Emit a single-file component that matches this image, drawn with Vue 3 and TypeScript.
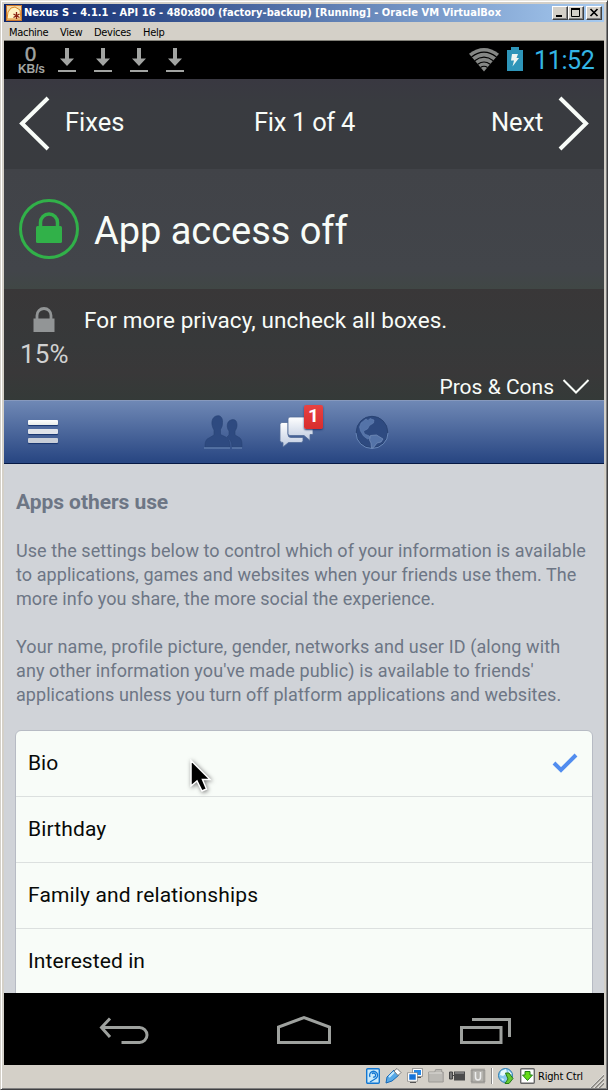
<script setup lang="ts">
const menus: string[] = ['Machine', 'View', 'Devices', 'Help']
const downloads: number[] = [1, 2, 3, 4]
const intro: string[] = [
  'Use the settings below to control which of your information is available',
  'to applications, games and websites when your friends use them. The',
  'more info you share, the more social the experience.',
]
const details: string[] = [
  'Your name, profile picture, gender, networks and user ID (along with',
  'any other information you\'ve made public) is available to friends\'',
  'applications unless you turn off platform applications and websites.',
]
interface Permission { label: string; checked: boolean }
const permissions: Permission[] = [
  { label: 'Bio', checked: true },
  { label: 'Birthday', checked: false },
  { label: 'Family and relationships', checked: false },
  { label: 'Interested in', checked: false },
]
</script>

<template>
  <div class="window">
    <header class="titlebar">
      <svg class="app-icon" width="16" height="16" viewBox="0 0 16 16">
        <rect x="0" y="0" width="16" height="16" fill="#c9762d" />
        <path d="M1 1h14v14H1z" fill="#f3d9a4" />
        <path d="M1 14L2 7l3-4 4-1 5 3 1 9z" fill="#fff3c4" stroke="#dd8a2c" />
        <path d="M10.500 7v7M7.500 9l6 3.500M13.500 9l-6 3.500" stroke="#8a2010" stroke-width="1.300" />
      </svg>
      <span class="title">Nexus S - 4.1.1 - API 16 - 480x800 (factory-backup) [Running] - Oracle VM VirtualBox</span>
      <div class="controls">
        <button class="ctl"><svg width="14" height="12"><path d="M3 9h6" stroke="#000" stroke-width="2" /></svg></button>
        <button class="ctl"><svg width="14" height="12"><path d="M2.500 2.500v7h8v-7" fill="none" stroke="#000" /><path d="M2 2h9" stroke="#000" stroke-width="2" /></svg></button>
        <button class="ctl last"><svg width="14" height="12"><path d="M3.500 2l7 7M10.500 2l-7 7" stroke="#000" stroke-width="1.700" /></svg></button>
      </div>
    </header>
    <nav class="menubar"><span v-for="m in menus" :key="m" :class="m.toLowerCase()">{{ m }}</span></nav>

    <main class="screen">
      <div class="android-status">
        <div class="rate"><b>0</b><span>KB/s</span></div>
        <svg v-for="d in downloads" :key="d" class="download" width="18" height="26" viewBox="0 0 18 26">
          <path d="M7 0h4v10.500h5l-7 7.500-7-7.500h5z" fill="#a2a4a2" /><path d="M0 23h18" stroke="#a2a4a2" stroke-width="2" />
        </svg>
        <svg class="wifi" width="30" height="24" viewBox="0 0 30 24">
          <path d="M15 23.500L0 5.800Q15-5.600 30 5.800z" fill="#858785" />
          <g fill="none" stroke="#000" stroke-width="1.100"><path d="M2.500 9Q15-.8 27.500 9" /><path d="M5.700 12.700Q15 5.500 24.300 12.700" /><path d="M8.800 16.300Q15 11.700 21.200 16.300" /><path d="M11.500 19.500Q15 17 18.500 19.500" /></g>
        </svg>
        <svg class="battery" width="16" height="24" viewBox="0 0 16 24">
          <path d="M4 0h8v3h4v21H0V3h4z" fill="#2e95b9" /><path d="M5 7h6l-1.500 4H12L5.500 19.500l1.500-6H4z" fill="#eef6f2" />
        </svg>
        <time>11:52</time>
      </div>

      <section class="fix-nav">
        <svg class="chev-left" width="32" height="56" viewBox="0 0 32 56"><path d="M30 2L4 27.500 30 53" fill="none" stroke="#f8fcf8" stroke-width="4" /></svg>
        <span class="fixes">Fixes</span><span class="counter">Fix 1 of 4</span><span class="next">Next</span>
        <svg class="chev-right" width="32" height="56" viewBox="0 0 32 56"><path d="M2 2l26 25.500L2 53" fill="none" stroke="#f8fcf8" stroke-width="4" /></svg>
      </section>

      <section class="access">
        <svg width="60" height="60" viewBox="0 0 60 60">
          <circle cx="30" cy="30" r="28.500" fill="none" stroke="#31b149" stroke-width="3" />
          <rect x="17" y="27" width="26" height="17" rx="1.500" fill="#31b149" />
          <path d="M21.500 28v-4.500a8.500 8.500 0 0 1 17 0V28" fill="none" stroke="#31b149" stroke-width="3.500" />
        </svg>
        <h1>App access off</h1>
      </section>

      <section class="tip">
        <div class="tip-row">
          <div class="score">
            <svg width="22" height="26" viewBox="0 0 22 26"><path d="M.5 11.500h21V25H.5z" fill="#929596" /><path d="M4 12V8.500a7 7 0 0 1 14 0V12" fill="none" stroke="#929596" stroke-width="2.800" /></svg>
            <span>15%</span>
          </div>
          <p>For more privacy, uncheck all boxes.</p>
        </div>
        <div class="pros"><span>Pros &amp; Cons</span><svg width="28" height="16" viewBox="0 0 28 16"><path d="M1.500 1l12.500 12.500L26.500 1" fill="none" stroke="#f8fcf8" stroke-width="2" /></svg></div>
      </section>

      <section class="fb-bar">
        <div class="burger"><i></i><i></i><i></i></div>
        <svg class="friends" width="39" height="35" viewBox="0 0 39 35">
          <g fill="#2e4a80" stroke="#294373" stroke-width=".6">
            <path d="M27 5c4-1.500 6 1 6 5 0 3-1 4-2 6v4l5 3c2 2 2 5 2 9H28c0-5-2-8-5-10l2-2v-4c-3-4-2-10 2-11z" />
            <path d="M11 1.500c5-2.500 8 1 7.500 6 0 4-1 5-2 7v5c6 3 8 3 9 8l.5 4.500H1c0-5 1-8 4-9l5-3v-5C7 10 7 4 11 1.500z" />
          </g><path d="M0 33h26M28 33h10" stroke="#6f8cb8" />
        </svg>
        <div class="messages">
          <svg width="37" height="34" viewBox="0 0 37 34">
            <defs><linearGradient id="bubbles" x2="0" y2="1"><stop stop-color="#fff" /><stop offset="1" stop-color="#bfcbe0" /></linearGradient></defs>
            <g fill="url(#bubbles)" stroke="#526b97" stroke-width=".8">
              <path d="M3 8.500q-2 0-2 2v16q0 2 3 2v4.500l5.500-4.500H22q2 0 2-2v-3H12q-3 0-3-3V8.500z" />
              <path d="M11 3h21q2 0 2 2v15.500h-3v6l-6-5H11q-2 0-2-2V5q0-2 2-2z" />
            </g>
          </svg>
          <span class="badge">1</span>
        </div>
        <svg class="globe" width="34" height="35" viewBox="0 0 34 35">
          <circle cx="17" cy="17" r="15.700" fill="#2e4a80" stroke="#294373" /><path d="M1 18a16 15.500 0 0 0 32 0" fill="none" stroke="#6685b7" />
          <path d="M6 8l5-4 2 1.500 2-2 4 1.500-.5 3-4 2.500-2 3.500-4 2 1 3 5 2 1 2-3 1-4-3-3-5-1-4z" fill="#5473a8" stroke="#6b87b7" stroke-width=".5" />
          <path d="M15.500 20.500l6-.5 6.500 4-2 3-4 1-3.500 4.500-2 .5-.5-5-1.500-3z" fill="#5473a8" stroke="#7892bd" stroke-width=".7" />
        </svg>
      </section>

      <section class="content">
        <h2>Apps others use</h2>
        <p><span v-for="(line, i) in intro" :key="line" :class="'a' + i">{{ line }}</span></p>
        <p><span v-for="(line, i) in details" :key="line" :class="'b' + i">{{ line }}</span></p>
        <ul>
          <li v-for="(p, i) in permissions" :key="p.label"><span :class="'row' + i">{{ p.label }}</span>
            <svg v-if="p.checked" width="26" height="20" viewBox="0 0 26 20"><path d="M2 10l7 7L24 2" fill="none" stroke="#528def" stroke-width="4" /></svg>
          </li>
        </ul>
        <svg class="cursor" width="32" height="40" viewBox="0 0 32 40"><path d="M6 4.500v25.500l6-5 5 10 4.500-2-4-9.500h7.500z" fill="#000" stroke="#fff" stroke-width="1.500" /></svg>
      </section>

      <nav class="android-nav">
        <svg width="52" height="32" viewBox="0 0 52 32"><path d="M12 1.500L3.500 10.500l8.500 9.500M3.500 10.500h38a7.500 7.500 0 0 1 0 15H23.500" fill="none" stroke="#9ea19e" stroke-width="3" /></svg>
        <svg width="56" height="34" viewBox="0 0 56 34"><path d="M2.500 27.500V12L28 2.500 53.500 12v15.500z" fill="none" stroke="#9ea19e" stroke-width="3" /></svg>
        <svg width="52" height="30" viewBox="0 0 52 30"><path d="M1.500 10.500H41v15H1.500zM12 2.500h37.500V20" fill="none" stroke="#9ea19e" stroke-width="3" /></svg>
      </nav>
    </main>

    <footer class="vm-status">
      <svg width="14" height="16" viewBox="0 0 14 16"><rect x=".7" y=".7" width="12.600" height="14.600" rx="1" fill="#cbeafa" stroke="#1277d2" stroke-width="1.400" /><path d="M4 9a4 4 0 1 1 5 2l-5 3M7 9a2 2 0 1 0-1-3" fill="none" stroke="#1277d2" stroke-width="1.300" /></svg>
      <svg width="17" height="16" viewBox="0 0 17 16"><path d="M1 15l1-6 7-7 5 5-7 6z" fill="#56a9e8" stroke="#1769b6" /><path d="M9 3l3-2.500 4 4-3 3z" fill="#fff" stroke="#777" /><path d="M4 9l5-5" stroke="#c5eaff" stroke-width="2" /></svg>
      <svg width="16" height="16" viewBox="0 0 16 16"><path d="M6.500 1.500h8v6h-8z" fill="#2488e8" stroke="#fff" /><path d="M5.500.5h10v8h-10z" fill="none" stroke="#777" stroke-width=".6" /><path d="M8 9.500h6" stroke="#555" /><path d="M1.500 5.500h8v7h-8z" fill="#1673d8" stroke="#fff" stroke-width="1.500" /><path d="M.5 4.700h10v8.600H.5z" fill="none" stroke="#777" stroke-width=".6" /><path d="M3 14.500h6" stroke="#555" /></svg>
      <svg width="16" height="16" viewBox="0 0 16 16"><path d="M.7 13.500V4h6l1-2.500h6V4h1.500v10H.7z" fill="#bbb9b4" stroke="#9b9995" /><path d="M1 5h13" stroke="#dedcd7" /></svg>
      <svg width="16" height="16" viewBox="0 0 16 16"><path d="M5 3.500h11v9H5z" fill="#4b4b4b" /><path d="M6 5h9" stroke="#aaa" /><path d="M.5 4v7h3V4zM5 7.500H3" fill="#777" stroke="#444" /></svg>
      <svg width="16" height="16" viewBox="0 0 16 16"><rect x="1.500" y="1.500" width="13" height="13" fill="none" stroke="#8e8c88" stroke-width="2" stroke-dasharray="1 1" /><rect x="2" y="2" width="12" height="12" fill="#b5b3ae" stroke="#92908c" /><path d="M5.500 4v5q0 3 2.500 3t2.500-3V4" fill="none" stroke="#eee" stroke-width="1.500" /></svg>
      <i class="separator"></i>
      <svg width="17" height="16" viewBox="0 0 17 16"><circle cx="7.500" cy="7.500" r="7" fill="#8acaef" stroke="#277aae" /><path d="M3 3l5-2 1 4-4 3-3-1zM10 2l4 4-3 1zM3 10l3 1-1 2z" fill="#e8faff" /><path d="M7.500 5h3.500l4 5.500-4 5H7l3-4.500z" fill="#65c933" stroke="#257c18" /></svg>
      <svg class="host" width="15" height="16" viewBox="0 0 15 16"><rect x=".7" y=".7" width="13.600" height="14.600" rx="1" fill="#fff" stroke="#666" stroke-width="1.400" /><path d="M5 3.500h5V7h2.500l-5 5.500L2.500 7H5z" fill="#65dc16" stroke="#208214" /></svg>
      <span>Right Ctrl</span>
      <svg class="grip" width="14" height="14" viewBox="0 0 14 14"><path d="M1 14L14 1M5 14l9-9M9 14l5-5" stroke="#888681" stroke-width="1.700" /><path d="M0 14L14 0M4 14L14 4M8 14l6-6" stroke="#fff" stroke-width=".6" /></svg>
    </footer>
  </div>
</template>

<style>
html, body { margin: 0; overflow: hidden; background: #d4d0c8; }
</style>

<style scoped>
* { box-sizing: border-box; }
svg { display: block; flex: none; }
.window { width: 608px; height: 1090px; padding: 3px 3px 0; border: 1px solid; border-color: #e9e6df #404042 #404042 #d4d0c8; background: #d4d0c8; font-family: Roboto, sans-serif; box-shadow: inset 1px 1px #fff, inset -1px -1px #808080; }
.titlebar { height: 18px; display: flex; align-items: center; padding: 0 2px; background: linear-gradient(90deg, #0a246a, #a6caf0); color: #fff; width: 600px; }
.app-icon { margin-right: 2px; }
.title { font: bold 11px/18px "DejaVu Sans Condensed", "DejaVu Sans", sans-serif; white-space: nowrap; letter-spacing: .03px; }
.controls { display: flex; margin-left: auto; }
.ctl { width: 16px; height: 14px; padding: 0; background: #d4d0c8; border: 1px solid; border-color: #fff #404040 #404040 #fff; box-shadow: inset -1px -1px #808080; }
.last { margin-left: 2px; }
.menubar { height: 19px; padding: 2px 5px 0; display: flex; width: 600px; border-bottom: 1px solid #828078; font: 11px/18px "DejaVu Sans Condensed", sans-serif; color: #000; }
.menubar span { letter-spacing: -.3px; line-height: 17px; }
.machine { width: 51px; } .view { width: 34px; } .devices { width: 49px; }
.screen { width: 600px; height: 1024px; background: #000; overflow: hidden; }
.android-status { height: 38px; display: flex; padding: 0 9px 0 14px; }
.rate { width: 40px; margin-top: 4px; color: #a2a4a2; font-family: "Liberation Sans", sans-serif; font-weight: bold; display: flex; flex-direction: column; }
.rate b { font-size: 20px; font-weight: 500; line-height: 23px; height: 22px; padding-left: 7px; margin-top: -2px; -webkit-text-stroke: .5px #a2a4a2; }
.rate span { font-size: 12px; line-height: 12px; margin-top: -2px; letter-spacing: -.1px; }
.download { margin: 7px 18px 0 0; }
.wifi { margin: 7px 8px 0 auto; }
.battery { margin-top: 6px; }
time { color: #33b5e5; font-size: 25px; line-height: 40px; width: 61px; margin-left: 11px; letter-spacing: -.35px; }
.fix-nav { height: 90px; display: grid; grid-template-columns: 61px 189px 237px 67px 46px; background: linear-gradient(#393841, #393b40 25%, #393b3f); color: #f8fcf8; font-size: 25.500px; line-height: 87px; white-space: nowrap; }
.counter { letter-spacing: -.3px; } .next { letter-spacing: -.1px; }
.chev-left { margin: 17px 0 0 14px; } .chev-right { margin-top: 17px; }
.access { height: 120px; padding: 0 15px; display: flex; align-items: center; gap: 15px; background: linear-gradient(#414348, #42454a 85%, #404745); color: #f8fcf8; }
h1 { margin: 4px 0 0; font-weight: 400; font-size: 38px; line-height: 50px; letter-spacing: -.04px; }
.tip { height: 111px; background: linear-gradient(#393738, #37393a 48%, #393839 75%, #343a38); color: #f8fcf8; }
.tip-row { display: flex; height: 84px; padding: 18px 0 0 16px; }
.score { width: 64px; color: #d0d1d1; font-size: 26px; line-height: 42px; letter-spacing: .2px; }
.score svg { margin-left: 13px; }
.tip-row p { margin: 0; font-size: 22.500px; line-height: 26px; white-space: nowrap; letter-spacing: .1px; }
.pros { display: flex; justify-content: flex-end; padding-right: 14px; font-size: 21px; line-height: 28px; gap: 8px; }
.pros svg { margin-top: 6px; }
.fb-bar { height: 64px; display: flex; padding-left: 24px; background: linear-gradient(#6f88b5, #294783 97%); border-top: 1px solid #8799bd; border-bottom: 1px solid #061944; }
.burger { width: 30px; margin-top: 19px; } .burger i { display: block; height: 5px; margin-bottom: 4px; border-radius: 1px; background: linear-gradient(#fff, #e8ece9); box-shadow: 0 1px 1px #17336e; }
.burger i:nth-child(2) { background: #dfe3ea; } .burger i:nth-child(3) { background: #c8ced8; }
.friends { margin: 14px 0 0 146px; }
.messages { position: relative; width: 37px; margin: 13px 0 0 36px; }
.badge { position: absolute; left: 25px; top: -9px; width: 19px; height: 24px; border-radius: 2px; background: linear-gradient(#e74242, #d82d2d); box-shadow: 0 1px 2px #223a71; color: white; font-size: 19px; font-weight: 700; line-height: 21px; text-align: center; }
.globe { margin: 14px 0 0 39px; }
.content { position: relative; height: 529px; overflow: hidden; padding: 26px 11px 0 11px; background: #d0d3d8; color: #6d7685; }
h2 { font-size: 21px; line-height: 24px; margin: 0 0 25px 1px; letter-spacing: -.06px; }
.content p { font-size: 18px; line-height: 24px; margin: 0 0 24px 1px; height: 72px; white-space: nowrap; }
.content p + p { margin-bottom: 23px; }
.content p span { display: block; }
.a0, .a1 { letter-spacing: .072px; } .a2 { letter-spacing: .055px; }
.b0 { letter-spacing: .11px; } .b1 { letter-spacing: .09px; } .b2 { letter-spacing: .055px; }
.content ul { list-style: none; padding: 0; margin: 0; background: #f8fcf8; border: 1px solid #b7bbc4; border-radius: 6px 6px 0 0; color: #080a08; font-size: 21px; width: 578px; }
.content li { height: 66px; padding: 0 14px 2px 12px; border-bottom: 1px solid #dce0df; display: flex; align-items: center; justify-content: space-between; }
.content li:last-child { border-bottom: 0; }
.row1, .row2 { letter-spacing: .14px; } .row3 { letter-spacing: .08px; }
.cursor { position: absolute; left: 181px; top: 292px; filter: drop-shadow(1px 1px 2px #777); }
.android-nav { height: 72px; display: grid; grid-template-columns: 178px 184px 52px; padding: 24px 0 0 94px; }
.android-nav svg:nth-child(2) { margin-top: -2px; }
.vm-status { height: 23px; width: 600px; display: flex; padding: 3px 1px 0 362px; gap: 5px; font: 11px/16px "DejaVu Sans Condensed", sans-serif; position: relative; }
.vm-status > span { white-space: nowrap; margin: 1px 0 0 -2px; letter-spacing: -.2px; }
.separator { width: 2px; height: 16px; border-left: 1px solid #888; border-right: 1px solid #fff; }
.grip { position: absolute; right: 0; bottom: 0; }
</style>
